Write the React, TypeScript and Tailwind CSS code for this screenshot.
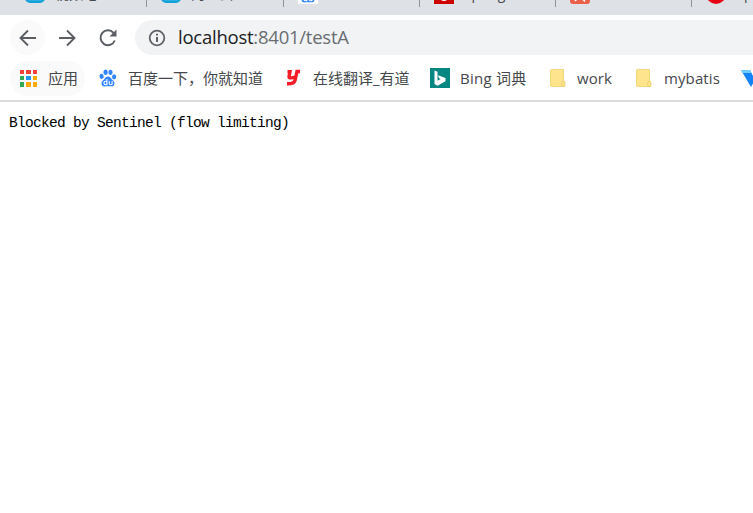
import React from "react";

const cjk = "font-['Open_Sans','Noto_Sans_CJK_SC',sans-serif]";

function Tab({ children, label }: { children: React.ReactNode; label: string }) {
  return (
    <div className="flex h-[7px] w-[136.25px] shrink-0 border-r-[1.5px] border-[#90959b]">
      <div className="flex h-full w-full overflow-hidden pl-[14px]">
        <div className="-mt-[16px] h-5 w-5 shrink-0">{children}</div>
        <span className="-mt-[16px] ml-[10px] whitespace-nowrap text-[14px] leading-5 text-[#45494d]">{label}</span>
      </div>
    </div>
  );
}

function PawIcon() {
  return (
    <svg viewBox="0 0 20 20" className="h-5 w-5 shrink-0" fill="#3385ff">
      <ellipse cx="3.6" cy="8.3" rx="2.1" ry="2.6" transform="rotate(-12 3.6 8.3)" />
      <ellipse cx="7.6" cy="4.3" rx="2.100" ry="2.700" />
      <ellipse cx="12.500" cy="4.400" rx="2.100" ry="2.700" transform="rotate(8 12.5 4.4)" />
      <ellipse cx="16.100" cy="8.800" rx="2.100" ry="2.600" />
      <path d="M10 8.500c2 0 2.800 1.800 4 3.100 1.500 1.500 2.900 2.600 2.400 4.600-.5 2-2.200 2.400-4 2H7.800c-2 .5-3.800 0-4.200-2-.5-2 1-3.200 2.400-4.600C7.200 10.300 8 8.500 10 8.500Z" />
      <path d="M8.900 11v5.700H7.600a1.700 1.700 0 0 1 0-3.400h1.300M11.200 13v2.300c0 2 2.900 1.800 2.900 0V13v3.700" stroke="#fff" strokeWidth="1.100" fill="none" />
    </svg>
  );
}

function FolderIcon() {
  return (
    <svg viewBox="0 0 20 20" className="h-5 w-5 shrink-0">
      <path d="M3 1.500h12.500v12h1.200v5H3.200L2.500 18V2Z" fill="#ffe48e" stroke="#f3d678" />
      <path d="M15.500 13.500h-1.500l-.5 2 1 3h2.200v-4Z" fill="#ffe48e" stroke="#f0d070" />
    </svg>
  );
}

const appColors = ["#f44336", "#f44336", "#f44336", "#34a853", "#2196f3", "#f9ab00", "#34a853", "#f9ab00", "#f9ab00"];

export default function App() {
  return (
    <div className={`h-[513px] w-[753px] overflow-hidden bg-white ${cjk}`}>
      <header className="h-[102px] border-b-2 border-[#dadce0]">
        <div className="flex h-[15px] overflow-hidden bg-[#dee1e6] pl-[11px]">
          <Tab label="视频地址"><div className="h-[19px] rounded-[5px] border-2 border-[#14a0d8] bg-[#29b1e3]" /></Tab>
          <Tab label="阿里云"><div className="h-[19px] rounded-[5px] border-2 border-[#14a0d8] bg-[#29b1e3]" /></Tab>
          <Tab label=""><div className="h-full bg-white"><PawIcon /></div></Tab>
          <Tab label="Spring"><div className="flex h-full items-end justify-center bg-[#cc0000] pb-[3px]"><div className="h-3 w-2 rounded-full bg-white" /></div></Tab>
          <Tab label="">
            <svg viewBox="0 0 20 20" className="h-5 w-5"><rect width="20" height="20" rx="3" fill="#eb6048" /><path d="m5 17 1.500-1.500M13 15.500l2 2" fill="none" stroke="#fff" strokeWidth="1.500" /></svg>
          </Tab>
          <Tab label="Sp"><div className="h-full rounded-full bg-[#e60012]" /></Tab>
        </div>
        <div className="flex h-[45px] items-center pl-[10px]">
          <div className="flex h-[35px] w-[35px] items-center justify-center rounded-full bg-[#fafafa]">
            <svg viewBox="0 0 18 18" className="h-[18px] w-[18px]" fill="none" stroke="#5b5f64" strokeWidth="1.900"><path d="M17 9H2M9 1.500 1.500 9 9 16.500" /></svg>
          </div>
          <svg viewBox="0 0 18 18" className="ml-[13px] h-[18px] w-[18px]" fill="none" stroke="#5b5f64" strokeWidth="1.900"><path d="M1 9h15M9 1.500 16.500 9 9 16.500" /></svg>
          <svg viewBox="0 0 20 20" className="ml-[22px] h-5 w-5" fill="none" stroke="#5b5f64" strokeWidth="2"><path d="M16.800 12.500A7.400 7.400 0 1 1 15.600 5" /><path d="M18.500 1.500v7h-7Z" fill="#5b5f64" stroke="none" /></svg>
          <div className="ml-[17px] flex h-[35px] flex-1 items-center rounded-l-full bg-[#f1f3f4] pl-[13px]">
            <svg viewBox="0 0 18 18" className="h-[18px] w-[18px]" fill="none" stroke="#5f6368" strokeWidth="1.800"><circle cx="9" cy="9" r="7.300" /><path d="M9 8v5M9 4.800v1.800" strokeWidth="2" /></svg>
            <div className="mb-[2px] ml-[12px] whitespace-nowrap text-[18.5px] leading-6 tracking-[-0.24px] text-[#6a6e73]"><span className="text-[#202124]">localhost</span>:8401/testA</div>
          </div>
        </div>
        <div className="flex h-[36px] items-center whitespace-nowrap pl-[10px] text-[15px] leading-5 text-[#45484c]">
          <div className="flex h-[35px] w-[75px] shrink-0 items-center rounded-full bg-[#fafafa] pl-[10px]">
            <div className="grid h-[17px] w-[17px] grid-cols-3 gap-[2px]">
              {appColors.map((color, i) => <i key={i} style={{ backgroundColor: color }} />)}
            </div>
            <span className="ml-[11px]">应用</span>
          </div>
          <div className="ml-[13px] flex w-[165px] shrink-0 items-center gap-[10px]"><PawIcon /><span>百度一下，你就知道</span></div>
          <div className="ml-[20px] flex w-[127px] shrink-0 items-center gap-[10px]">
            <svg viewBox="0 0 20 20" className="h-5 w-5 shrink-0" fill="none" stroke="#f51d28" strokeWidth="3.400"><path d="M4.500 3.800H7L6 8.500q.2 2.500 6 .5M17 3.500h-3L12 12.500Q11 16 4 15.800" /></svg>
            <span>在线翻译_有道</span>
          </div>
          <div className="ml-[20px] flex w-[98px] shrink-0 items-center gap-[10px]">
            <svg viewBox="0 0 20 20" className="h-5 w-5 shrink-0"><path d="M0 0h20v20H0Z" fill="#088682" /><path d="m4.500 2.500 3 1.200v9.100l3.200-1.800-1.600-.8-1.200-2.900 7.600 2.700v3.200l-8 4.500-3-1.700Z" fill="#fff" /></svg>
            <span className="tracking-[0.25px]">Bing 词典</span>
          </div>
          <div className="ml-[20px] flex w-[66px] shrink-0 items-center gap-[9px]"><FolderIcon /><span className="tracking-[0.1px]">work</span></div>
          <div className="ml-[20px] flex w-[87px] shrink-0 items-center gap-[10px]"><FolderIcon /><span className="tracking-[0.1px]">mybatis</span></div>
          <svg viewBox="0 0 20 20" className="ml-[20px] h-5 w-5 shrink-0"><path d="M0 2h9l3 6 3-6h5L10 19Z" fill="#1284f7" /><path d="M0 2h9l1.500 3H2Z" fill="#6fcaff" /></svg>
        </div>
      </header>
      <pre className="pl-[9px] pt-[11px] font-['Liberation_Mono',monospace] text-[14.5px] leading-5 tracking-[-0.7px] text-black">Blocked by Sentinel (flow limiting)</pre>
    </div>
  );
}
